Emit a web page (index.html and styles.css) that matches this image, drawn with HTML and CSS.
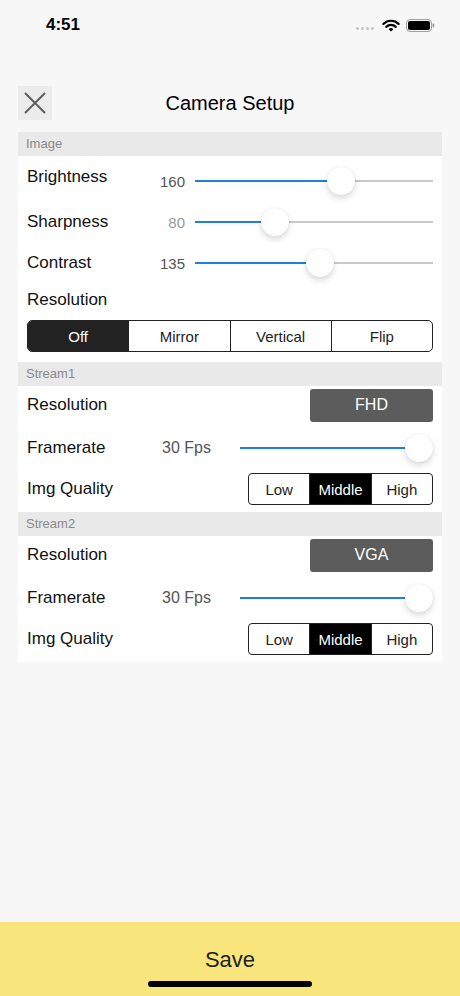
FILE: index.html
```html
<!DOCTYPE html>
<html>
<head>
	<meta http-equiv="Content-Type" content="text/html; charset=utf-8" />
	<title>Camera Setup</title>
	<link rel="stylesheet" href="styles.css">
</head>

<body>
	<div class="barra_estado">
		<span class="hora">4:51</span>
		<div class="iconos_estado">
			<span class="puntos"><i></i><i></i><i></i><i></i></span>
			<svg width="18" height="13" viewBox="0 0 18 13">
				<path d="M1.4 4.9 A10.8 10.8 0 0 1 16.6 4.9" fill="none" stroke="#000" stroke-width="2.2" stroke-linecap="round"/>
				<path d="M4.3 7.9 A6.7 6.7 0 0 1 13.7 7.9" fill="none" stroke="#000" stroke-width="2.2" stroke-linecap="round"/>
				<path d="M9 12.6 L6.6 10.2 A3.4 3.4 0 0 1 11.4 10.2 Z" fill="#000"/>
			</svg>
			<svg width="29" height="13" viewBox="0 0 29 13">
				<rect x="0.5" y="0.5" width="25" height="12" rx="3.5" fill="none" stroke="#a0a0a0"/>
				<rect x="2" y="2" width="22" height="9" rx="2" fill="#000"/>
				<rect x="26.5" y="4.5" width="1.8" height="4" rx="0.8" fill="#a0a0a0"/>
			</svg>
		</div>
	</div>

	<div class="cabecera">
		<button class="cerrar">
			<svg width="22" height="22" viewBox="0 0 22 22">
				<path d="M1 1 L21 21 M21 1 L1 21" stroke="#5e5e5e" stroke-width="2"/>
			</svg>
		</button>
		<h1>Camera Setup</h1>
	</div>

	<div class="panel">
		<div class="titulo_seccion">Image</div>
		<div class="seccion seccion_imagen">
			<div class="fila alto_42">
				<span class="etiqueta etiqueta_alta">Brightness</span>
				<span class="valor">160</span>
				<div class="slider" style="--p:0.627"><div class="relleno"></div><div class="pulgar"></div></div>
			</div>
			<div class="fila alto_40">
				<span class="etiqueta">Sharpness</span>
				<span class="valor valor_tenue">80</span>
				<div class="slider" style="--p:0.314"><div class="relleno"></div><div class="pulgar"></div></div>
			</div>
			<div class="fila alto_42">
				<span class="etiqueta">Contrast</span>
				<span class="valor">135</span>
				<div class="slider" style="--p:0.529"><div class="relleno"></div><div class="pulgar"></div></div>
			</div>
			<div class="fila alto_32">
				<span class="etiqueta">Resolution</span>
			</div>
			<div class="segmentos segmentos_imagen">
				<span class="activo">Off</span>
				<span>Mirror</span>
				<span>Vertical</span>
				<span>Flip</span>
			</div>
		</div>

		<div class="titulo_seccion">Stream1</div>
		<div class="seccion seccion_stream">
			<div class="fila alto_38">
				<span class="etiqueta">Resolution</span>
				<span class="boton_res">FHD</span>
			</div>
			<div class="fila alto_48">
				<span class="etiqueta etiqueta_ancha">Framerate</span>
				<span class="valor_fps">30 Fps</span>
				<div class="slider" style="--p:1"><div class="relleno"></div><div class="pulgar"></div></div>
			</div>
			<div class="fila alto_34">
				<span class="etiqueta">Img Quality</span>
				<div class="segmentos segmentos_calidad">
					<span>Low</span>
					<span class="activo">Middle</span>
					<span>High</span>
				</div>
			</div>
		</div>

		<div class="titulo_seccion">Stream2</div>
		<div class="seccion seccion_stream">
			<div class="fila alto_38">
				<span class="etiqueta">Resolution</span>
				<span class="boton_res">VGA</span>
			</div>
			<div class="fila alto_48">
				<span class="etiqueta etiqueta_ancha">Framerate</span>
				<span class="valor_fps">30 Fps</span>
				<div class="slider" style="--p:1"><div class="relleno"></div><div class="pulgar"></div></div>
			</div>
			<div class="fila alto_34">
				<span class="etiqueta">Img Quality</span>
				<div class="segmentos segmentos_calidad">
					<span>Low</span>
					<span class="activo">Middle</span>
					<span>High</span>
				</div>
			</div>
		</div>
	</div>

	<div class="barra_guardar">
		<div class="guardar">Save</div>
		<div class="indicador"></div>
	</div>
</body>
</html>
```

FILE: styles.css
```css
body {
	margin: 0;
	width: 460px;
	height: 996px;
	background-color: #f7f7f7;
	font-family: "Liberation Sans", Arial, Helvetica, sans-serif;
	color: #111111;
	display: flex;
	flex-direction: column;
}

.barra_estado {
	height: 50px;
	display: flex;
	align-items: center;
	justify-content: space-between;
	padding: 0 25px 0 46px;
}

.hora {
	font-size: 17px;
	font-weight: bold;
	color: #000000;
}

.iconos_estado {
	display: flex;
	align-items: center;
	gap: 6px;
}

.puntos {
	display: flex;
	gap: 2px;
	margin: 6px 2px 0 0;
}

.puntos i {
	width: 3px;
	height: 3px;
	border-radius: 50%;
	background-color: #c4c4c4;
}

.cabecera {
	margin-top: 36px;
	height: 34px;
	padding: 0 18px;
	display: grid;
	grid-template-columns: 34px 1fr 34px;
	align-items: center;
}

.cerrar {
	width: 34px;
	height: 34px;
	padding: 0;
	border: none;
	background-color: #ececec;
	display: flex;
	align-items: center;
	justify-content: center;
}

.cabecera h1 {
	margin: 0;
	font-size: 20px;
	font-weight: normal;
	text-align: center;
	color: #000000;
}

.panel {
	margin: 12px 18px 0;
}

.titulo_seccion {
	height: 24px;
	line-height: 24px;
	padding-left: 8px;
	font-size: 13px;
	color: #8a8a8a;
	background-color: #e9e9e9;
}

.seccion {
	background-color: #ffffff;
	padding: 0 9px;
}

.seccion_imagen {
	padding-top: 4px;
	padding-bottom: 10px;
}

.seccion_stream {
	padding-bottom: 6px;
}

.fila {
	display: flex;
	align-items: center;
}

.alto_32 { height: 32px; }
.alto_34 { height: 34px; }
.alto_38 { height: 38px; }
.alto_40 { height: 40px; }
.alto_42 { height: 42px; }
.alto_48 { height: 48px; }

.etiqueta {
	font-size: 17px;
	width: 123px;
	flex-shrink: 0;
}

.etiqueta_alta {
	margin-bottom: 8px;
}

.etiqueta_ancha {
	width: 135px;
}

.valor {
	width: 35px;
	margin-right: 10px;
	text-align: right;
	font-size: 15px;
	color: #555555;
}

.valor_tenue {
	color: #9a9a9a;
}

.valor_fps {
	width: 78px;
	font-size: 16px;
	color: #555555;
}

.slider {
	flex: 1;
	position: relative;
	height: 2px;
	background-color: #c9c9c9;
}

.relleno {
	position: absolute;
	left: 0;
	top: 0;
	height: 100%;
	width: calc(var(--p) * (100% - 28px) + 14px);
	background-color: #1b7fe3;
}

.pulgar {
	position: absolute;
	top: 50%;
	left: calc(var(--p) * (100% - 28px));
	width: 28px;
	height: 28px;
	margin-top: -14px;
	border-radius: 50%;
	background-color: #ffffff;
	box-shadow: 0 3px 6px rgba(0, 0, 0, 0.16), 0 0 1px rgba(0, 0, 0, 0.12);
}

.segmentos {
	display: flex;
	box-sizing: border-box;
	height: 32px;
	border: 1px solid #222222;
	border-radius: 5px;
	overflow: hidden;
}

.segmentos span {
	flex: 1;
	display: flex;
	align-items: center;
	justify-content: center;
	font-size: 15px;
	color: #222222;
	border-left: 1px solid #222222;
}

.segmentos span:first-child {
	border-left: none;
}

.segmentos .activo {
	background-color: #222222;
	color: #ffffff;
}

.segmentos_imagen {
	margin-top: 4px;
}

.segmentos_calidad {
	width: 185px;
	margin-left: auto;
	border-radius: 4px;
}

.segmentos_calidad .activo {
	background-color: #000000;
}

.boton_res {
	margin-left: auto;
	width: 123px;
	height: 33px;
	border-radius: 3px;
	background-color: #5c5c5c;
	color: #ffffff;
	font-size: 16px;
	display: flex;
	align-items: center;
	justify-content: center;
}

.barra_guardar {
	margin-top: auto;
	height: 74px;
	box-sizing: border-box;
	padding-top: 25px;
	background-color: #f8e57b;
}

.guardar {
	height: 26px;
	line-height: 26px;
	text-align: center;
	font-size: 22px;
	color: #222222;
}

.indicador {
	width: 164px;
	height: 6px;
	margin: 8px auto 0;
	border-radius: 3px;
	background-color: #000000;
}
```
